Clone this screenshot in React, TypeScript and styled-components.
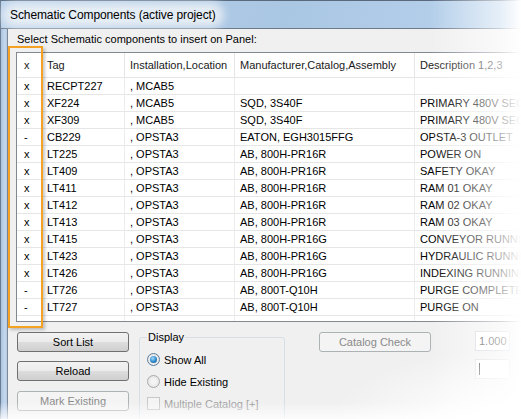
import React from "react";
import styled, {createGlobalStyle} from "styled-components";

const GlobalStyle = createGlobalStyle`
  html, body {
    margin: 0;
    padding: 0;
    background: #ffffff;
    overflow: hidden;
  }
  * {
    box-sizing: border-box;
  }
`

const Viewport = styled.div`
  position: relative;
  width: 521px;
  height: 419px;
  overflow: hidden;
  font-family: "Liberation Sans", Arial, sans-serif;
  font-size: 11px;
  color: #000;
`

const Window = styled.div`
  width: 640px;
  height: 419px;
  display: flex;
  flex-direction: column;
  background: #b2cce8;
  border-top: 1px solid #5a6a7e;
  border-left: 1px solid #6b7c92;
`

const TitleBar = styled.div`
  height: 28px;
  flex: none;
  display: flex;
  align-items: center;
  padding-left: 7px;
  background: linear-gradient(100deg, #b8d0ea 0%, #a9c6e3 45%, #b4cfea 70%, #b9d3ee 100%);
  border-bottom: 1px solid #6d7a8c;
`

const TitleText = styled.span`
  font-family: "Liberation Sans", Arial, sans-serif;
  font-size: 12px;
  letter-spacing: -0.1px;
  color: #000;
  padding: 0 2px;
  border-radius: 8px;
  background: rgba(236, 241, 246, 0.85);
  box-shadow: 0 0 8px 6px rgba(236, 241, 246, 0.85);
`

const Frame = styled.div`
  flex: 1;
  display: flex;
  min-height: 0;
`

const LeftFrame = styled.div`
  width: 7px;
  flex: none;
  background: linear-gradient(90deg, #a9c4e2 0%, #c3d6ec 60%, #b7cde6 100%);
  border-right: 1px solid #7b8796;
`

const Client = styled.div`
  flex: 1;
  background: #f0f0f0;
  padding: 4px 0 0 8px;
  display: flex;
  flex-direction: column;
  overflow: hidden;
`

const Instruction = styled.div`
  flex: none;
  height: 13px;
  line-height: 13px;
  padding-left: 1px;
`

const ListView = styled.div`
  flex: none;
  margin-top: 6px;
  height: 270px;
  border: 1px solid #828790;
  background: #fff;
  overflow: hidden;
`

const Grid = styled.div`
  display: grid;
  grid-template-columns: 25px 83px 110px 180px 220px;
`

const HeadCell = styled.div<{ $first?: boolean }>`
  height: 25px;
  line-height: 24px;
  padding-left: ${p => p.$first ? "7px" : "5px"};
  border-right: 1px solid #e5e5e5;
  border-bottom: 1px solid #e5e5e5;
  color: #1a1a1a;
  white-space: nowrap;
  overflow: hidden;
`

const Cell = styled.div<{ $first?: boolean }>`
  height: 17px;
  line-height: 16px;
  padding-left: ${p => p.$first ? "7px" : "5px"};
  border-right: 1px solid #ececec;
  border-bottom: 1px solid #e6e6e6;
  white-space: nowrap;
  overflow: hidden;
`

const Controls = styled.div`
  flex: none;
  margin-top: 10px;
  display: flex;
  align-items: flex-start;
  padding-left: 1px;
`

const ButtonColumn = styled.div`
  display: flex;
  flex-direction: column;
  gap: 9px;

  & > :last-child {
    margin-top: 1px;
  }
`

const Button = styled.div<{ $disabled?: boolean; $width?: number }>`
  width: ${p => p.$width ?? 112}px;
  height: 20px;
  border-radius: 3px;
  border: 1px solid ${p => p.$disabled ? "#adb2b5" : "#707070"};
  background: ${p => p.$disabled
    ? "#f4f4f4"
    : "linear-gradient(180deg, #f2f2f2 0%, #ebebeb 50%, #dddddd 51%, #cfcfcf 100%)"};
  color: ${p => p.$disabled ? "#8a8a8a" : "#000"};
  display: flex;
  align-items: center;
  justify-content: center;
  font-size: 11px;
`

const GroupBox = styled.fieldset`
  margin: 0 0 0 10px;
  padding: 10px 0 0 7px;
  width: 146px;
  height: 100px;
  border: 1px solid #d5dfe5;
  border-radius: 3px;
  display: flex;
  flex-direction: column;
  gap: 9px;
  position: relative;
  top: -1px;
`

const Legend = styled.legend`
  padding: 0 1px;
  margin-left: 0;
  font-size: 11px;
  color: #000;
`

const OptionRow = styled.div<{ $disabled?: boolean }>`
  display: flex;
  align-items: center;
  gap: 4px;
  height: 13px;
  color: ${p => p.$disabled ? "#a0a0a0" : "#000"};
`

const Radio = styled.span<{ $checked?: boolean }>`
  width: 13px;
  height: 13px;
  border-radius: 50%;
  border: 1px solid ${p => p.$checked ? "#5e7e9e" : "#a9a9a9"};
  background: radial-gradient(circle at 50% 50%, #f4f4f4 30%, #dcdcdc 100%);
  display: flex;
  align-items: center;
  justify-content: center;
  &::after {
    content: "";
    display: ${p => p.$checked ? "block" : "none"};
    width: 7px;
    height: 7px;
    border-radius: 50%;
    background: radial-gradient(circle at 40% 35%, #9fdcff 0%, #2b86c8 55%, #14507e 100%);
  }
`

const CheckBox = styled.span`
  width: 13px;
  height: 13px;
  border: 1px solid #c8c8c8;
  background: #f4f4f4;
`

const RightGroup = styled.div`
  margin-left: 34px;
`

const Fields = styled.div`
  margin-left: 44px;
  margin-top: -1px;
  display: flex;
  flex-direction: column;
  gap: 8px;
`

const FieldRow = styled.div`
  display: flex;
  align-items: center;
  gap: 10px;
`

const TextBox = styled.div`
  width: 35px;
  height: 20px;
  border: 1px solid #d2d5da;
  background: #fff;
  padding: 0 3px;
  line-height: 18px;
  color: #333;
  display: flex;
  align-items: center;
`

const Caret = styled.span`
  width: 1px;
  height: 12px;
  background: #000;
`

const FieldLabel = styled.span`
  color: #666;
  white-space: nowrap;
`

const Highlight = styled.div`
  position: absolute;
  left: 8px;
  top: 46px;
  width: 35px;
  height: 282px;
  border: 2px solid #f5a124;
  box-shadow: 2px 2px 3px rgba(0, 0, 0, 0.22);
  pointer-events: none;
`

const Fade = styled.div`
  position: absolute;
  inset: 0;
  pointer-events: none;
  background:
    radial-gradient(ellipse 190px 70px at 521px 419px, #ffffff 20%, rgba(255, 255, 255, 0) 100%),
    linear-gradient(180deg, rgba(255, 255, 255, 0) 402px, rgba(255, 255, 255, 0.8) 419px),
    linear-gradient(90deg, rgba(255, 255, 255, 0) 430px, rgba(255, 255, 255, 0.3) 462px, rgba(255, 255, 255, 0.65) 500px, #ffffff 521px);
`

const headers = ["x", "Tag", "Installation,Location", "Manufacturer,Catalog,Assembly", "Description 1,2,3"];

const rows: string[][] = [
    ["x", "RECPT227", ", MCAB5", "", ""],
    ["x", "XF224", ", MCAB5", "SQD, 3S40F", "PRIMARY 480V SECONDARY"],
    ["x", "XF309", ", MCAB5", "SQD, 3S40F", "PRIMARY 480V SECONDARY"],
    ["-", "CB229", ", OPSTA3", "EATON, EGH3015FFG", "OPSTA-3 OUTLET"],
    ["x", "LT225", ", OPSTA3", "AB, 800H-PR16R", "POWER ON"],
    ["x", "LT409", ", OPSTA3", "AB, 800H-PR16R", "SAFETY OKAY"],
    ["x", "LT411", ", OPSTA3", "AB, 800H-PR16R", "RAM 01 OKAY"],
    ["x", "LT412", ", OPSTA3", "AB, 800H-PR16R", "RAM 02 OKAY"],
    ["x", "LT413", ", OPSTA3", "AB, 800H-PR16R", "RAM 03 OKAY"],
    ["x", "LT415", ", OPSTA3", "AB, 800H-PR16G", "CONVEYOR RUNNING"],
    ["x", "LT423", ", OPSTA3", "AB, 800H-PR16G", "HYDRAULIC RUNNING"],
    ["x", "LT426", ", OPSTA3", "AB, 800H-PR16G", "INDEXING RUNNING"],
    ["-", "LT726", ", OPSTA3", "AB, 800T-Q10H", "PURGE COMPLETE"],
    ["-", "LT727", ", OPSTA3", "AB, 800T-Q10H", "PURGE ON"],
    ["", "", "", "", ""],
];

const App: React.FC = () => {
    return (
        <>
            <GlobalStyle/>
            <Viewport>
                <Window>
                    <TitleBar>
                        <TitleText>Schematic Components (active project)</TitleText>
                    </TitleBar>
                    <Frame>
                        <LeftFrame/>
                        <Client>
                            <Instruction>Select Schematic components to insert on Panel:</Instruction>
                            <ListView>
                                <Grid>
                                    {headers.map((h, i) => <HeadCell key={h} $first={i === 0}>{h}</HeadCell>)}
                                    {rows.map((r, ri) => r.map((c, ci) =>
                                        <Cell key={ri + "-" + ci} $first={ci === 0}>{c}</Cell>
                                    ))}
                                </Grid>
                            </ListView>
                            <Controls>
                                <ButtonColumn>
                                    <Button>Sort List</Button>
                                    <Button>Reload</Button>
                                    <Button $disabled>Mark Existing</Button>
                                </ButtonColumn>
                                <GroupBox>
                                    <Legend>Display</Legend>
                                    <OptionRow><Radio $checked/>Show All</OptionRow>
                                    <OptionRow><Radio/>Hide Existing</OptionRow>
                                    <OptionRow $disabled><CheckBox/>Multiple Catalog [+]</OptionRow>
                                </GroupBox>
                                <RightGroup>
                                    <Button $disabled>Catalog Check</Button>
                                </RightGroup>
                                <Fields>
                                    <FieldRow>
                                        <TextBox>1.000</TextBox>
                                        <FieldLabel>Quantity</FieldLabel>
                                    </FieldRow>
                                    <FieldRow>
                                        <TextBox><Caret/></TextBox>
                                        <FieldLabel>Item</FieldLabel>
                                    </FieldRow>
                                </Fields>
                            </Controls>
                        </Client>
                    </Frame>
                </Window>
                <Highlight/>
                <Fade/>
            </Viewport>
        </>
    )
}

export default App;
